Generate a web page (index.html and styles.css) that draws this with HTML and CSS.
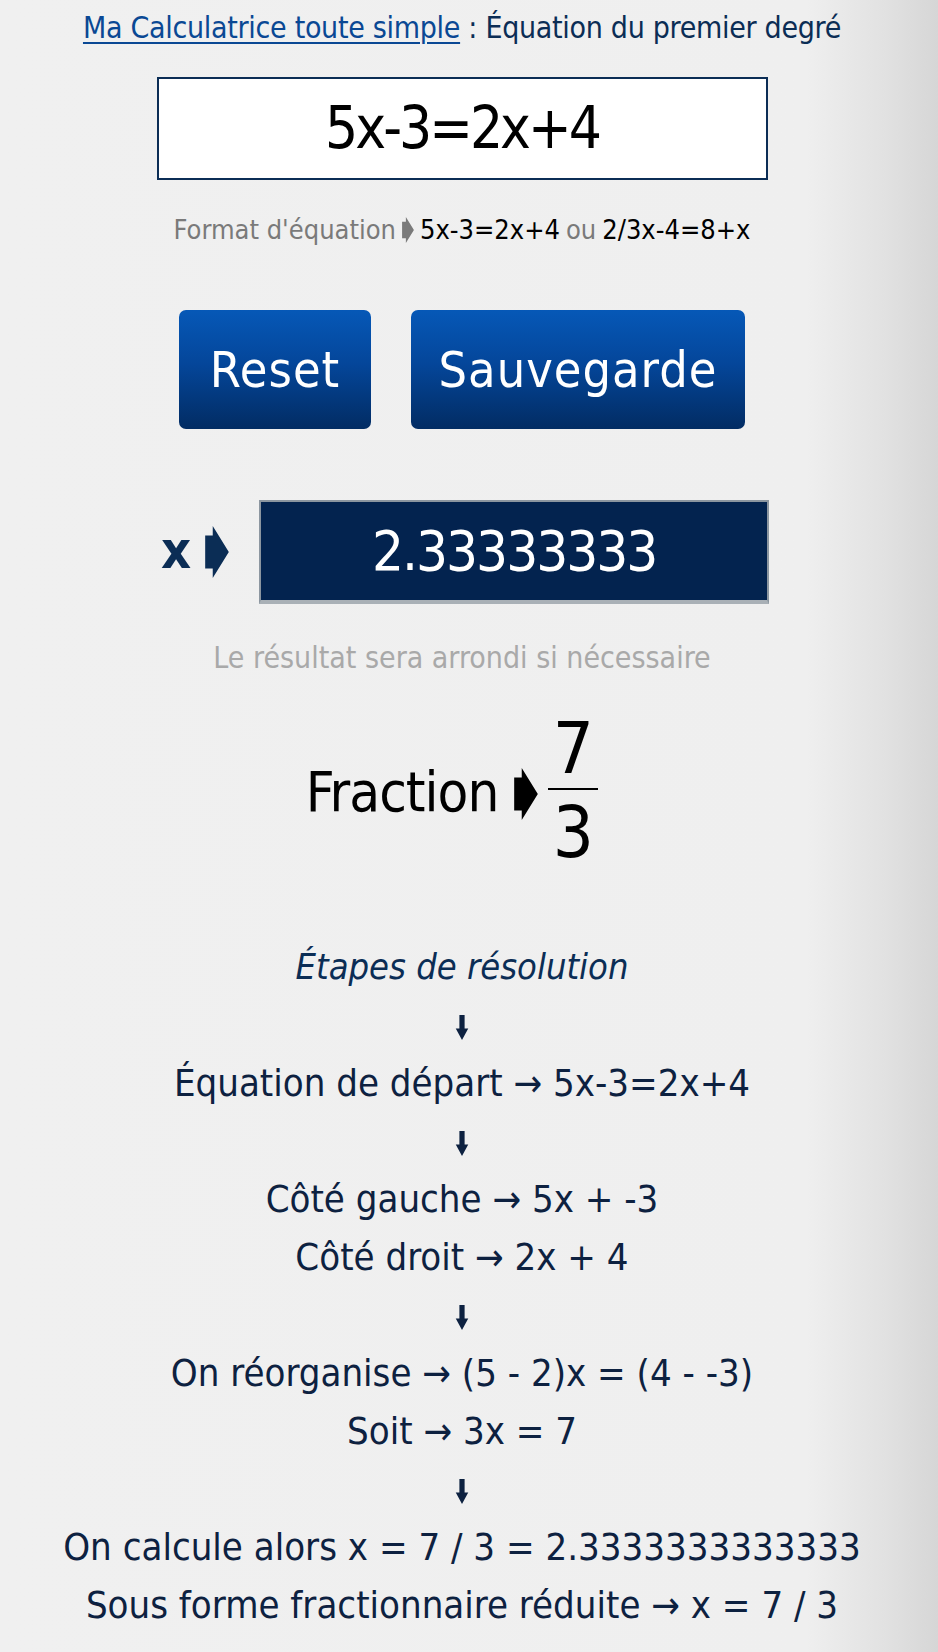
FILE: index.html
```html
<!doctype html>
<html lang="fr">
<head>
<meta charset="UTF-8">
<title>Ma Calculatrice toute simple : Équation du premier degré</title>
<link rel="stylesheet" href="styles.css">
</head>
<body>
<div class="page">
	<h1 class="title"><a href="#">Ma Calculatrice toute simple</a> : Équation du premier degré</h1>

	<div class="equation">5x-3=2x+4</div>

	<p class="format">Format d'équation
		<svg class="pointer" viewBox="0 0 10 22"><polygon points="0,4 3.2,4 3.2,0 10,11 3.2,22 3.2,18 0,18"/></svg>
		<span class="ex">5x-3=2x+4</span> ou <span class="ex">2/3x-4=8+x</span></p>

	<div class="buttons">
		<button class="btn">Reset</button>
		<button class="btn">Sauvegarde</button>
	</div>

	<div class="result">
		<span class="var">x</span>
		<svg class="pointer big" viewBox="0 0 10 22"><polygon points="0,4 3.2,4 3.2,0 10,11 3.2,22 3.2,18 0,18"/></svg>
		<div class="result-box">2.33333333</div>
	</div>
	<p class="note">Le résultat sera arrondi si nécessaire</p>

	<div class="fraction">
		<span>Fraction</span>
		<svg class="pointer frac-ptr" viewBox="0 0 10 22"><polygon points="0,4 3.2,4 3.2,0 10,11 3.2,22 3.2,18 0,18"/></svg>
		<span class="frac"><span class="num">7</span><span class="den">3</span></span>
	</div>

	<div class="steps">
		<p class="steps-title">Étapes de résolution</p>
		<p class="down"><svg viewBox="0 0 12 24"><path d="M3.5 0h5v13h3.5l-6 11-6-11h3.5z"/></svg></p>
		<p>Équation de départ → 5x-3=2x+4</p>
		<p class="down"><svg viewBox="0 0 12 24"><path d="M3.5 0h5v13h3.5l-6 11-6-11h3.5z"/></svg></p>
		<p>Côté gauche → 5x + -3</p>
		<p>Côté droit → 2x + 4</p>
		<p class="down"><svg viewBox="0 0 12 24"><path d="M3.5 0h5v13h3.5l-6 11-6-11h3.5z"/></svg></p>
		<p>On réorganise → (5 - 2)x = (4 - -3)</p>
		<p>Soit → 3x = 7</p>
		<p class="down"><svg viewBox="0 0 12 24"><path d="M3.5 0h5v13h3.5l-6 11-6-11h3.5z"/></svg></p>
		<p>On calcule alors x = 7 / 3 = 2.3333333333333</p>
		<p>Sous forme fractionnaire réduite → x = 7 / 3</p>
	</div>
</div>
</body>
</html>
```

FILE: styles.css
```css
*{ margin:0; padding:0;}
body{
	min-height:1652px;
	background:linear-gradient(to right,#f0f0f0 0%,#efefef 86%,#e2e2e2 94%,#d6d6d6 100%);
	font-family:"DejaVu Sans Condensed","DejaVu Sans","Liberation Sans",sans-serif;
	color:#0d2140;
}
.page{
	width:924px;
	display:flex;
	flex-direction:column;
	align-items:center;
	text-align:center;
}
.title{
	margin-top:8px;
	font-size:30px;
	line-height:40px;
	font-weight:normal;
	color:#0b2d55;
	letter-spacing:-0.3px;
}
.title a{
	color:#0a4894;
	text-decoration:underline;
	text-decoration-thickness:2px;
	text-underline-offset:4px;
}
.equation{
	margin-top:29px;
	width:607px;
	height:99px;
	border:2px solid #0b2d55;
	background-color:#fff;
	font-size:58px;
	line-height:99px;
	letter-spacing:-3px;
	color:#000;
}
.format{
	margin-top:35px;
	font-size:27px;
	line-height:30px;
	color:#7a7a7a;
	display:flex;
	align-items:center;
	gap:6px;
}
.format .ex{ color:#000;}
.pointer{
	width:12px;
	height:26px;
	fill:#7a7a7a;
}
.buttons{
	margin-top:65px;
	display:flex;
	gap:40px;
}
.btn{
	height:119px;
	padding:0;
	border:none;
	border-radius:7px;
	background:linear-gradient(to bottom,#0658b7 0%,#04469a 45%,#022c63 100%);
	color:#fff;
	font-family:inherit;
	font-size:50px;
	letter-spacing:1px;
}
.btn:first-child{ width:192px;}
.btn:last-child{ width:334px;}
.result{
	margin-top:71px;
	margin-left:161px;
	align-self:flex-start;
	display:flex;
	align-items:center;
}
.var{
	font-size:52px;
	line-height:52px;
	color:#0b2d55;
	font-weight:bold;
	margin-bottom:4px;
}
.pointer.big{
	width:24px;
	height:52px;
	margin-left:14px;
	margin-right:30px;
	fill:#0b2d55;
}
.result-box{
	width:506px;
	height:98px;
	border:2px solid #8c96a0;
	border-bottom:4px solid #a9b0b6;
	background-color:#03234f;
	color:#fff;
	font-size:56px;
	line-height:98px;
	letter-spacing:-2px;
}
.note{
	margin-top:37px;
	font-size:30px;
	line-height:34px;
	color:#a9a9a9;
}
.fraction{
	margin-top:33px;
	display:flex;
	align-items:center;
	font-size:56px;
	letter-spacing:-1px;
	color:#000;
	margin-left:-20px;
}
.pointer.frac-ptr{
	width:24px;
	height:52px;
	fill:#000;
	margin:6px 10px 0 16px;
}
.frac{
	display:flex;
	flex-direction:column;
	align-items:center;
	width:50px;
	font-size:72px;
	letter-spacing:0;
}
.frac .num{
	line-height:80px;
	border-bottom:2px solid #000;
	width:50px;
}
.frac .den{
	line-height:84px;
}
.steps{
	margin-top:64px;
	font-size:38px;
	line-height:58px;
}
.steps-title{
	font-style:italic;
	font-size:36px;
	color:#0b2d55;
}
.down svg{
	width:14px;
	height:25px;
	fill:#0d2140;
	vertical-align:middle;
}
```
